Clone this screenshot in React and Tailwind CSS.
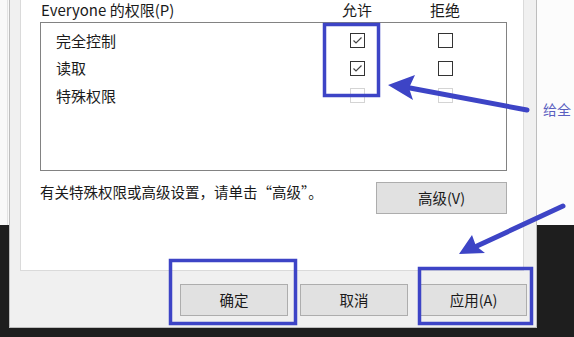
import React from "react";

const font = { fontFamily: '"Noto Sans CJK SC", "Noto Sans", sans-serif' };

const rows = [
  { name: "完全控制", allow: true, deny: false, disabled: false },
  { name: "读取", allow: true, deny: false, disabled: false },
  { name: "特殊权限", allow: false, deny: false, disabled: true },
];

function CheckBox({ checked, disabled }) {
  return (
    <span
      className={`flex h-[15px] w-[15px] items-center justify-center border bg-white ${
        disabled ? "border-[#d4d4d4]" : "border-[#333333]"
      }`}
    >
      {checked && (
        <svg width="13" height="13" viewBox="0 0 13 13">
          <path d="M2.5 6.5 L5 9 L10.5 3.5" fill="none" stroke="#444" strokeWidth="1.2" />
        </svg>
      )}
    </span>
  );
}

function Button({ children, className = "" }) {
  return (
    <button
      className={`flex h-[32px] items-center justify-center border border-[#adadad] bg-[#e1e1e1] text-[14.5px] text-[#1a1a1a] ${className}`}
    >
      {children}
    </button>
  );
}

export default function App() {
  return (
    <div className="relative h-[337px] w-[574px] overflow-hidden bg-[#1e1e1e]" style={font}>
      {/* background window behind the dialog */}
      <div className="flex h-[225px] bg-[#f8f8f8]">
        <div className="w-[8px] border-r border-[#e2e2e2]" />
        <div className="flex-1" />
        <div className="w-[37px] whitespace-nowrap bg-[#fcfcfc] pl-[6px] pt-[99px] text-[14px] leading-[20px] text-[#5a5fc0]">
          给全
        </div>
      </div>

      {/* properties dialog */}
      <div className="absolute left-[9px] top-0 flex h-[328px] w-[528px] flex-col border-x border-b border-[#bdbdbd] bg-[#f0f0f0]">
        <div className="ml-[10px] mr-[12px] flex h-[271px] flex-col border-x border-b border-[#dadada] bg-white pl-[19px] pr-[16px]">
          <div className="flex h-[22px] items-start pr-[18px] pt-[1px] text-[15px] leading-[17px] text-[#1a1a1a]">
            <span className="flex-1 pl-[1px]">Everyone 的权限(P)</span>
            <span className="w-[88px] text-center">允许</span>
            <span className="w-[88px] text-center">拒绝</span>
          </div>
          <div className="flex h-[149px] flex-col border border-[#828282] pl-[15px] pr-[17px] pt-[4px]">
            {rows.map((r) => (
              <div key={r.name} className="flex h-[27.5px] items-center text-[15px] text-[#1a1a1a]">
                <span className="flex-1">{r.name}</span>
                <span className="flex w-[88px] justify-center">
                  <CheckBox checked={r.allow} disabled={r.disabled} />
                </span>
                <span className="flex w-[88px] justify-center">
                  <CheckBox checked={r.deny} disabled={r.disabled} />
                </span>
              </div>
            ))}
          </div>
          <div className="mt-[11px] flex items-start justify-between">
            <span className="text-[14.5px] leading-[20px] text-[#1a1a1a]">
              有关特殊权限或高级设置，请单击“高级”。
            </span>
            <Button className="w-[131px]">高级(V)</Button>
          </div>
        </div>
        <div className="flex justify-end gap-[12px] pr-[9px] pt-[13px]">
          <Button className="w-[108px]">确定</Button>
          <Button className="w-[108px]">取消</Button>
          <Button className="w-[107px]">应用(A)</Button>
        </div>
      </div>

      {/* annotations drawn on the screenshot */}
      <svg className="pointer-events-none absolute left-0 top-0" width="574" height="337">
        <g fill="none" stroke="#3d44c6" strokeWidth="3.5">
          <rect x="324.5" y="24.5" width="54" height="71" />
          <rect x="170.5" y="260.5" width="125" height="63" />
          <rect x="419.5" y="268.5" width="112" height="55" />
        </g>
        <g stroke="#3d44c6" strokeWidth="5" strokeLinecap="round">
          <line x1="527" y1="110" x2="410" y2="88" />
          <line x1="563" y1="206" x2="477" y2="246" />
        </g>
        <g fill="#3d44c6">
          <polygon points="388,85 415,75 409,88 413,100" />
          <polygon points="459,254 472,235 476,246 485,253" />
        </g>
      </svg>
    </div>
  );
}
